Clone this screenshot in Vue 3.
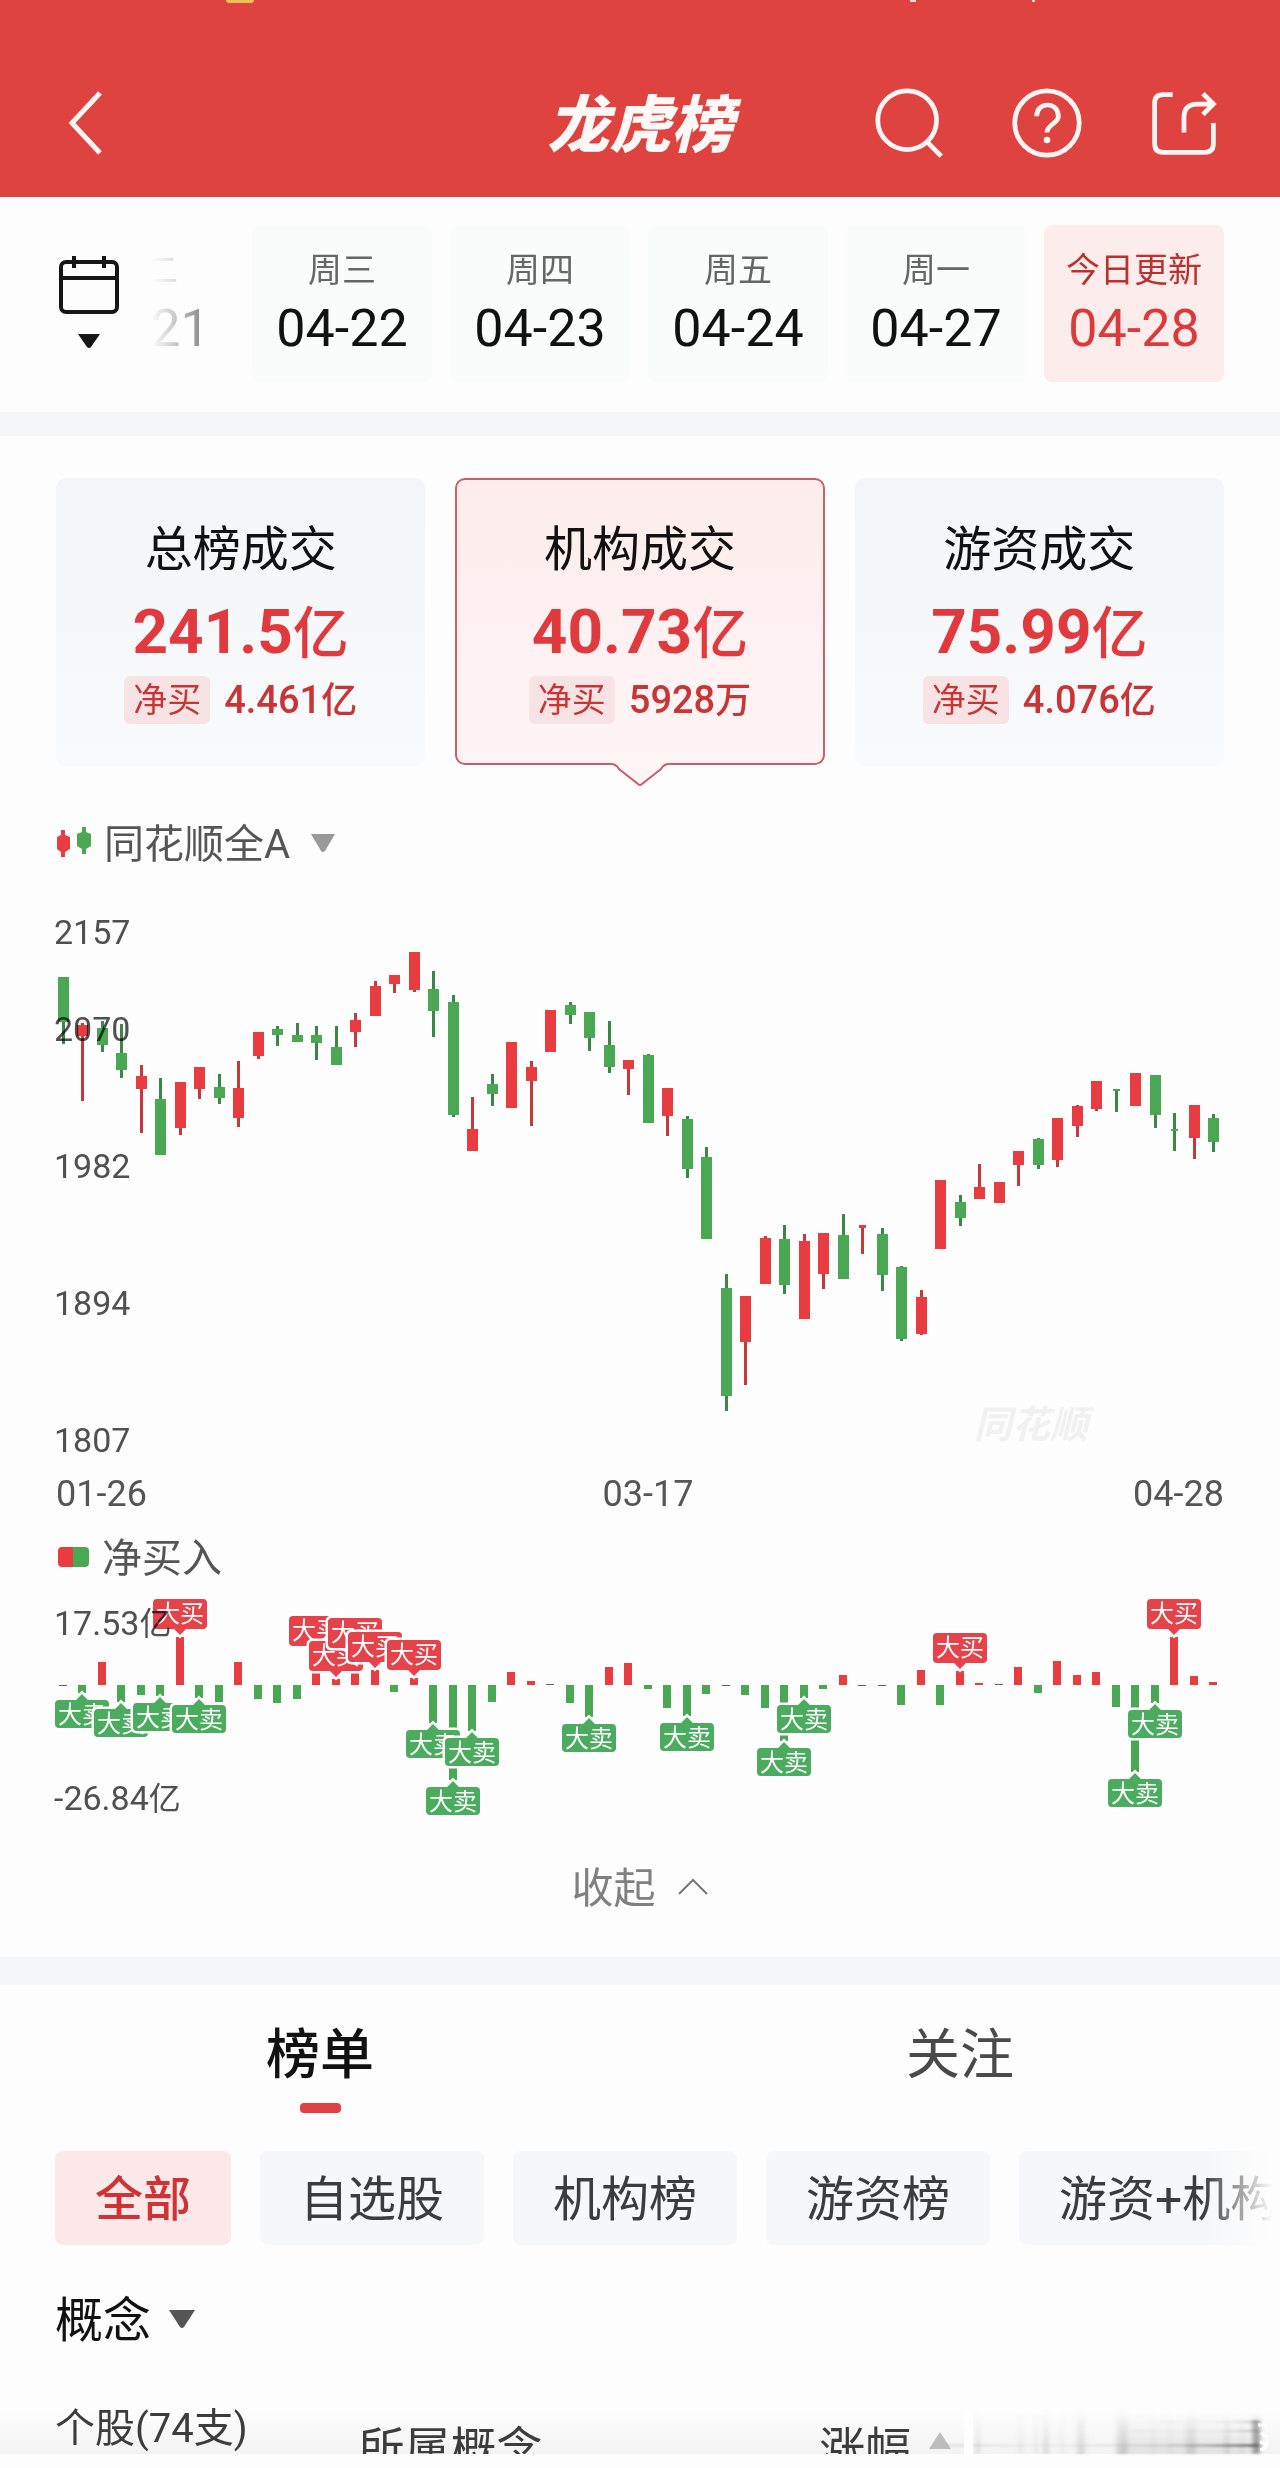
<script setup>
import { ref } from 'vue'

const days = [
  { week: '周二', date: '04-21' },
  { week: '周三', date: '04-22' },
  { week: '周四', date: '04-23' },
  { week: '周五', date: '04-24' },
  { week: '周一', date: '04-27' },
  { week: '今日更新', date: '04-28' },
]
const activeDay = ref('04-28')

const summary = [
  { title: '总榜成交', value: '241.5', net: '4.461', netUnit: '亿' },
  { title: '机构成交', value: '40.73', net: '5928', netUnit: '万' },
  { title: '游资成交', value: '75.99', net: '4.076', netUnit: '亿' },
]
const activeSummary = ref(1)

const tabs = ['榜单', '关注']
const activeTab = ref('榜单')
const chips = ['全部', '自选股', '机构榜', '游资榜', '游资+机构']
const activeChip = ref('全部')

const xAt = (i) => Math.round((6280 + i * 1950) / 100)

// u = up (red), d = down (green); high, body top, body bottom, low
const candles = [
  ['d', 97, 97, 142, 164], ['u', 143, 145, 156, 221], ['d', 141, 148, 165, 172], ['d', 144, 173, 190, 198],
  ['u', 185, 196, 209, 253], ['d', 198, 219, 275, 275], ['u', 202, 202, 248, 255], ['u', 187, 187, 209, 219],
  ['d', 194, 207, 218, 224], ['u', 181, 208, 238, 247], ['u', 152, 152, 176, 179], ['d', 146, 149, 155, 166],
  ['d', 143, 155, 162, 162], ['d', 146, 155, 163, 180], ['d', 146, 167, 185, 185], ['u', 133, 140, 152, 167],
  ['u', 101, 106, 136, 136], ['u', 95, 95, 104, 113], ['u', 72, 72, 110, 112], ['d', 91, 109, 131, 157],
  ['d', 115, 122, 235, 237], ['u', 217, 249, 271, 271], ['d', 194, 204, 214, 226], ['u', 162, 162, 228, 228],
  ['u', 181, 187, 201, 246], ['u', 130, 130, 172, 172], ['d', 122, 125, 135, 144], ['d', 132, 132, 158, 171],
  ['d', 141, 165, 187, 193], ['u', 180, 180, 189, 215], ['d', 174, 175, 243, 243], ['u', 208, 208, 236, 256],
  ['d', 236, 239, 289, 298], ['d', 267, 277, 359, 359], ['d', 394, 408, 516, 531], ['u', 416, 416, 462, 505],
  ['u', 356, 358, 404, 404], ['d', 345, 359, 405, 414], ['u', 354, 361, 439, 439], ['u', 353, 353, 394, 409],
  ['d', 334, 355, 399, 399], ['u', 345, 345, 348, 374], ['d', 348, 354, 395, 411], ['d', 386, 387, 459, 461],
  ['u', 410, 417, 454, 455], ['u', 300, 300, 369, 369], ['d', 315, 322, 338, 346], ['u', 284, 307, 319, 319],
  ['u', 302, 302, 323, 323], ['u', 271, 271, 285, 306], ['d', 258, 259, 285, 289], ['u', 238, 238, 280, 287],
  ['u', 225, 226, 246, 257], ['u', 201, 201, 229, 231], ['d', 209, 209, 211, 232], ['u', 193, 193, 226, 226],
  ['d', 195, 195, 235, 248], ['d', 233, 249, 251, 271], ['u', 225, 225, 258, 279], ['d', 234, 238, 262, 272],
].map(([dir, high, top, bottom, low], i) => {
  const body = bottom - top
  return { i, dir, high, top, low, body, x: xAt(i), half: body < 4 ? 3 : 5 }
})

const H = 588
const priceTicks = [
  { text: '2157', y: 52 }, { text: '2070', y: 149 }, { text: '1982', y: 286 },
  { text: '1894', y: 423 }, { text: '1807', y: 560 },
].map((t) => ({ ...t, top: (t.y / H) * 100 + '%' }))
const midDate = { text: '03-17', left: (xAt(30) / 1280) * 100 + '%' }

const BASE = 98
const net = [
  0, -8, 23, -17, -10, -11, 48, -13, -17, 23, -14, -18, -14, 31, 6, 29, 15, -7, 7, -38,
  -95, -46, -17, 13, 4, 1, -18, -32, 18, 22, -4, -23, -31, -9, -1, -10, -23, -56, -13, -4,
  10, -1, -1, -20, 15, -20, 14, 2, 1, 18, -8, 24, 10, 13, -22, -87, -18, 48, 9, 3,
]
const bars = net.map((v, i) => ({
  i, x: xAt(i), h: Math.max(Math.abs(v), 1), y: v > 0 ? BASE - v : BASE,
  kind: Math.abs(v) < 2 ? 'flat' : v > 0 ? 'up' : 'down',
}))
const flagged = [1, 3, 5, 6, 7, 13, 14, 15, 16, 18, 19, 20, 21, 27, 32, 37, 38, 46, 55, 56, 57]
const badges = flagged.map((i) => {
  const v = net[i]
  const buy = v > 0
  const x = xAt(i)
  const top = buy ? BASE - v - 38 : BASE - v + 7
  const bottom = top + (buy ? 30 : 28)
  const l = x - 27
  const r = x + 27
  const d = buy
    ? `M${l + 4} ${top}H${r - 4}Q${r} ${top} ${r} ${top + 4}V${bottom - 4}Q${r} ${bottom} ${r - 4} ${bottom}H${x + 6}L${x} ${bottom + 6}L${x - 6} ${bottom}H${l + 4}Q${l} ${bottom} ${l} ${bottom - 4}V${top + 4}Q${l} ${top} ${l + 4} ${top}Z`
    : `M${l + 4} ${top}H${x - 6}L${x} ${top - 6}L${x + 6} ${top}H${r - 4}Q${r} ${top} ${r} ${top + 4}V${bottom - 4}Q${r} ${bottom} ${r - 4} ${bottom}H${l + 4}Q${l} ${bottom} ${l} ${bottom - 4}V${top + 4}Q${l} ${top} ${l + 4} ${top}Z`
  return { i, x, buy, d, ty: top + 23, text: buy ? '大买' : '大卖' }
})

const streaks = [
  [976, 4, 0.2], [1018, 5, 0.1], [1034, 4, 0.1], [1043, 6, 0.2], [1060, 4, 0.1],
  [1077, 8, 0.24], [1116, 12, 0.26], [1150, 6, 0.06], [1168, 4, 0.08], [1186, 10, 0.24],
  [1224, 6, 0.2], [1240, 5, 0.1], [1252, 8, 0.4],
]
</script>

<template>
  <main class="page">
    <header class="bar">
      <i class="peek gold"></i><i class="peek dot-a"></i><i class="peek dot-b"></i>
      <button class="icon" aria-label="返回">
        <svg width="44" height="70" viewBox="0 0 44 70"><path d="M40 5 12 35 40 65" /></svg>
      </button>
      <h1>龙虎榜</h1>
      <div class="actions">
        <button class="icon" aria-label="搜索">
          <svg width="72" height="72" viewBox="0 0 76 76"><circle cx="35" cy="35" r="31" /><path d="M56 58 71 73" /></svg>
        </button>
        <button class="icon" aria-label="帮助">
          <svg width="72" height="72" viewBox="0 0 76 76"><circle cx="38" cy="38" r="34" /><path d="M27 31C27 15 50 15 50 31C50 39 38 39 38 48" /><circle class="fill" cx="38" cy="56" r="3.5" /></svg>
        </button>
        <button class="icon" aria-label="分享">
          <svg width="72" height="72" viewBox="0 0 76 76"><path d="M26 8H16Q7 8 7 17V60Q7 69 16 69H60Q69 69 69 60V38M38 48V32Q38 18 52 18H67M58 7 69 18 58 29" /></svg>
        </button>
      </div>
    </header>

    <nav class="days">
      <div class="strip">
        <button v-for="d in days" :key="d.date" class="day" :class="{ on: d.date === activeDay }" @click="activeDay = d.date">
          <span class="week">{{ d.week }}</span>
          <span class="date">{{ d.date }}</span>
        </button>
      </div>
      <button class="calendar" aria-label="选择日期">
        <svg width="64" height="96" viewBox="0 0 64 96">
          <rect x="4" y="8" width="56" height="50" rx="5" /><path d="M4 24H60M17 2V14M47 2V14" />
          <path class="fill" d="M21 80H43L34 93Q32 95 30 93Z" />
        </svg>
      </button>
    </nav>
    <div class="gap top-gap"></div>

    <section class="summary">
      <button v-for="(s, i) in summary" :key="s.title" class="card" :class="{ on: i === activeSummary }" @click="activeSummary = i">
        <span class="title">{{ s.title }}</span>
        <span class="value">{{ s.value }}<span class="unit">亿</span></span>
        <span class="net"><span class="tag">净买</span><b>{{ s.net }}<span class="cn">{{ s.netUnit }}</span></b></span>
        <svg v-if="i === activeSummary" class="tip" width="58" height="24" viewBox="0 0 58 24"><path class="tip-fill" d="M0 0V2Q5 2 8 6L27 21Q29 23 31 21L50 6Q53 2 58 2V0Z" /><path class="tip-line" d="M0 1Q5 1 8 6L27 21Q29 23 31 21L50 6Q53 1 58 1" /></svg>
      </button>
    </section>

    <section class="charts">
      <button class="index">
        <svg width="36" height="32" viewBox="0 0 36 32">
          <path class="up" d="M5 3H9V8L14 10V22L9 25V30H5V25L1 22V10L5 8Z" /><path class="down" d="M26 0H30V5L35 7V19L30 22V27H26V22L21 19V7L26 5Z" />
        </svg>
        <span>同花顺全A</span>
        <svg class="caret" width="26" height="20" viewBox="0 0 26 20"><path d="M1 1H25L15 18Q13 20 11 18Z" /></svg>
      </button>

      <div class="stage">
        <svg class="plot" viewBox="0 0 1280 588">
          <g v-for="c in candles" :key="c.i" :class="c.dir === 'u' ? 'up' : 'down'">
            <rect class="wick" :x="c.x - 1" :y="c.high" width="3" :height="c.low - c.high" />
            <rect :x="c.x - c.half" :y="c.top" :width="c.half * 2 + 1" :height="c.body" />
          </g>
        </svg>
        <span v-for="t in priceTicks" :key="t.text" class="tick" :style="{ top: t.top }">{{ t.text }}</span>
        <span class="mark">同花顺</span>
      </div>
      <div class="dates">
        <span>01-26</span><span class="mid" :style="{ left: midDate.left }">{{ midDate.text }}</span><span>04-28</span>
      </div>

      <div class="legend"><i></i><span>净买入</span></div>
      <div class="stage">
        <svg class="plot" viewBox="0 0 1280 260">
          <rect v-for="b in bars" :key="b.i" :class="b.kind" :x="b.x - 4" :y="b.y" width="8" :height="b.h" />
          <g v-for="g in badges" :key="'g' + g.i" class="badge" :class="g.buy ? 'up' : 'down'">
            <path :d="g.d" />
            <text :x="g.x" :y="g.ty" text-anchor="middle">{{ g.text }}</text>
          </g>
        </svg>
        <span class="tick high">17.53<span class="cn">亿</span></span>
        <span class="tick low">-26.84<span class="cn">亿</span></span>
      </div>
      <button class="fold">
        <span>收起</span>
        <svg width="32" height="20" viewBox="0 0 32 20"><path d="M2 17 16 3 30 17" /></svg>
      </button>
    </section>
    <div class="gap"></div>

    <nav class="tabs">
      <button v-for="t in tabs" :key="t" :class="{ on: t === activeTab }" @click="activeTab = t">{{ t }}</button>
    </nav>
    <div class="chips">
      <button v-for="c in chips" :key="c" :class="{ on: c === activeChip }" @click="activeChip = c">{{ c }}</button>
    </div>
    <button class="concept">
      <span>概念</span>
      <svg class="caret" width="28" height="20" viewBox="0 0 28 20"><path d="M1 1H27L16 18Q14 20 12 18Z" /></svg>
    </button>

    <div class="list">
      <table>
        <thead>
          <tr>
            <th class="stock"><div>个股(74支)</div></th>
            <th class="theme"><div>所属概念</div></th>
            <th class="change"><div>涨幅<svg width="22" height="17" viewBox="0 0 22 17"><path d="M11 0 22 17H0Z" /></svg></div></th>
          </tr>
        </thead>
      </table>
      <svg class="smear" viewBox="0 0 1280 48" aria-hidden="true">
        <defs>
          <linearGradient id="fade" x1="0" y1="0" x2="0" y2="1"><stop offset="0" stop-color="#777" stop-opacity="0" /><stop offset="1" stop-color="#777" /></linearGradient>
          <linearGradient id="run" x1="0" y1="0" x2="1" y2="0"><stop offset="0" stop-color="#999" stop-opacity="0.3" /><stop offset="0.3" stop-color="#999" stop-opacity="0.1" /><stop offset="0.7" stop-color="#888" stop-opacity="0.3" /><stop offset="1" stop-color="#444" /></linearGradient>
          <filter id="soft"><feGaussianBlur stdDeviation="2 1" /></filter>
        </defs>
        <g filter="url(#soft)">
          <rect x="1120" y="6" width="140" height="40" fill="url(#fade)" opacity="0.14" />
          <rect v-for="s in streaks" :key="s[0]" :x="s[0]" y="2" :width="s[1]" height="44" fill="url(#fade)" :opacity="s[2]" />
          <rect x="945" y="36" width="315" height="3" fill="url(#run)" opacity="0.7" />
          <rect x="1130" y="22" width="130" height="2" fill="url(#run)" opacity="0.3" />
          <rect x="1160" y="13" width="100" height="2" fill="url(#run)" opacity="0.3" />
          <path d="M1252 12H1260V44L1254 46Z" fill="#555" opacity="0.4" />
        </g>
        <rect x="964" y="2" width="9" height="44" fill="#fefefe" />
        <path d="M1258 17H1267M1261 25 1267 29M1260 34 1267 36M1260 42Q1268 40 1267 32" fill="none" stroke="#fff" stroke-width="3" />
      </svg>
    </div>
  </main>
</template>

<style>
body { margin: 0; background: #fdfdfd; }
</style>

<style scoped>
.page { background: #fdfdfd; color: #111; font-family: Roboto, "Noto Sans CJK SC", sans-serif; overflow: hidden; }
button { font: inherit; color: inherit; background: none; border: 0; margin: 0; padding: 0; cursor: pointer; }
svg { display: block; flex: none; }
.up { fill: #e83c40; }
.down { fill: #4aa854; }
.flat { fill: #6b6468; }

.bar { position: relative; box-sizing: border-box; height: 197px; padding: 48px 60px 0; display: grid; grid-template-columns: 1fr auto 1fr; align-items: center; background: #de4340; }
.icon svg { fill: none; stroke: #fff6f4; stroke-width: 5; }
.icon .fill { fill: #fff6f4; stroke: none; }
.bar h1 { margin: 0; padding-bottom: 6px; font-family: "Noto Sans CJK SC", sans-serif; font-size: 62px; line-height: 80px; font-weight: 900; font-style: italic; color: #fff8f6; }
.actions { display: flex; justify-content: flex-end; gap: 65px; }
.peek { position: absolute; top: 0; height: 2px; background: #f7d9cf; }
.gold { left: 226px; width: 28px; height: 3px; border-radius: 0 0 8px 8px; background: #f2bd55; }
.dot-a { left: 910px; width: 6px; }
.dot-b { left: 1032px; width: 3px; }

.days { position: relative; padding: 28px 56px 30px; }
.strip { display: flex; justify-content: flex-end; gap: 18px; overflow: hidden; }
.day { flex: 0 0 180px; height: 157px; box-sizing: border-box; padding-top: 20px; border-radius: 8px; background: #fafbfb; display: flex; flex-direction: column; align-items: center; }
.day:first-child { background: none; }
.week { font-size: 34px; line-height: 50px; color: #666; }
.date { font-size: 52px; line-height: 68px; }
.day.on { background: #fcecec; }
.day.on .week { color: #b8332f; }
.day.on .date { color: #db3a3c; }
.calendar { position: absolute; left: 0; top: 0; bottom: 0; width: 244px; padding: 57px 0 0 57px; display: flex; align-items: flex-start; background: linear-gradient(to right, #fdfdfd 62%, rgba(253, 253, 253, 0.4) 88%); }
.calendar svg { fill: none; stroke: #161616; stroke-width: 4; }
.calendar .fill { fill: #161616; stroke: none; }

.gap { height: 28px; background: #f5f6f8; }
.top-gap { height: 24px; }

.summary { display: grid; grid-template-columns: repeat(3, 1fr); gap: 30px; padding: 42px 56px 0; }
.card { position: relative; height: 289px; box-sizing: border-box; padding-top: 32px; border-radius: 10px; display: flex; flex-direction: column; align-items: center; background: linear-gradient(#f4f5f7, #f9fafc); }
.card.on { height: 287px; padding-top: 30px; border: 2px solid #c86068; background: linear-gradient(#fdecec, #fff5f5); }
.title { font-size: 48px; line-height: 80px; }
.value { font-size: 62px; line-height: 84px; font-weight: 700; color: #e03a3e; }
.unit { font-size: 56px; font-weight: 500; }
.net { display: flex; align-items: center; gap: 14px; height: 48px; color: #c93536; }
.tag { padding: 0 9px; border-radius: 6px; font-size: 34px; line-height: 48px; background: #f8e3e4; }
.net b { font-size: 38px; line-height: 48px; font-weight: 500; }
.net .cn { font-size: 36px; }
.tip { position: absolute; left: 50%; bottom: -24px; margin-left: -29px; }
.tip-fill { fill: #fff5f5; }
.tip-line { fill: none; stroke: #c86068; stroke-width: 2; }

.index { display: flex; align-items: center; height: 56px; margin: 48px 56px 9px; font-size: 40px; color: #555; }
.index span { margin: 0 20px 0 12px; padding-bottom: 4px; }
.index .caret { fill: #999; }
.stage { position: relative; }
.plot { width: 100%; height: auto; }
.up .wick { fill: #c4393e; }
.down .wick { fill: #3b8749; }
.tick { position: absolute; left: 54px; transform: translateY(-50%); font-size: 34px; line-height: 44px; color: #505050; mix-blend-mode: multiply; }
.tick .cn { font-size: 32px; }
.high { top: 14%; }
.low { top: 81%; }
.mark { position: absolute; right: 15%; bottom: 3%; font-size: 38px; line-height: 50px; font-weight: 700; font-style: italic; color: #f1f1f1; }
.dates { position: relative; display: flex; justify-content: space-between; padding: 0 56px; font-size: 36px; line-height: 52px; color: #555; }
.mid { position: absolute; transform: translateX(-50%); }
.legend { display: flex; align-items: center; gap: 13px; height: 60px; margin: 7px 58px 0; font-size: 40px; color: #555; }
.legend span { padding-bottom: 4px; }
.legend i { width: 31px; height: 20px; border-radius: 4px; background: linear-gradient(to right, #e83c40 50%, #4aa854 50%); }
.badge path { stroke: #fff; stroke-width: 5; paint-order: stroke; }
.badge.up { fill: #e5424a; }
.badge.down { fill: #4bac60; }
.badge text { fill: #fff; font-size: 24px; font-family: "Noto Sans CJK SC", sans-serif; }
.fold { display: flex; align-items: center; justify-content: center; gap: 21px; width: 100%; height: 80px; margin-bottom: 30px; font-size: 42px; color: #808080; }
.fold span { padding-bottom: 6px; }
.fold svg { fill: none; stroke: #777; stroke-width: 2; }

.tabs { display: grid; grid-template-columns: 1fr 1fr; }
.tabs button { display: flex; flex-direction: column; align-items: center; gap: 12px; padding-top: 36px; height: 128px; font-size: 54px; line-height: 70px; color: #4a4a4a; }
.tabs .on { color: #111; font-weight: 500; }
.tabs .on::after { content: ""; width: 41px; height: 10px; border-radius: 4px; background: #de4246; }
.chips { position: relative; display: flex; gap: 29px; padding: 38px 0 0 55px; overflow: hidden; }
.chips button { flex: none; padding: 0 40px 6px; height: 94px; border-radius: 8px; font-size: 48px; white-space: nowrap; color: #3c3c3c; background: #f6f7f9; }
.chips .on { color: #cf3335; font-weight: 500; background: #fbe8e9; }
.chips::after { content: ""; position: absolute; top: 0; right: 0; bottom: 0; width: 76px; background: linear-gradient(to right, rgba(253, 253, 253, 0), #fdfdfd 90%); }
.concept { display: flex; align-items: center; gap: 17px; height: 60px; margin: 44px 55px 53px; font-size: 48px; }
.concept span { padding-bottom: 6px; }
.concept .caret { fill: #555; }

.list { position: relative; padding-bottom: 14px; }
table { width: 100%; border-collapse: collapse; table-layout: fixed; background: linear-gradient(to bottom, #fdfdfd 20%, #f3f3f3); }
th { padding: 0; text-align: left; vertical-align: top; font-weight: 400; color: #3c3c3c; }
th div { height: 52px; overflow: hidden; white-space: nowrap; }
.stock { width: 28%; }
.stock div { padding-left: 55px; font-size: 40px; line-height: 54px; }
.theme { width: 36%; }
.theme div, .change div { font-size: 46px; line-height: 94px; }
.change div { display: flex; gap: 18px; }
.change svg { margin-top: 30px; fill: #bdbdbd; }
.smear { position: absolute; left: 0; bottom: 12px; width: 100%; }
</style>
